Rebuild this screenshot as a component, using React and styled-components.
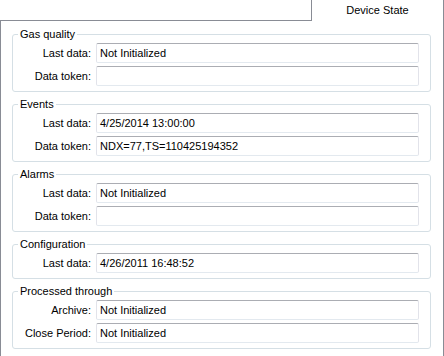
import React from 'react';
import styled, { createGlobalStyle } from 'styled-components';

const groups = [
  {
    title: 'Gas quality',
    rows: [
      { label: 'Last data:', value: 'Not Initialized' },
      { label: 'Data token:', value: '' },
    ],
  },
  {
    title: 'Events',
    rows: [
      { label: 'Last data:', value: '4/25/2014 13:00:00' },
      { label: 'Data token:', value: 'NDX=77,TS=110425194352' },
    ],
  },
  {
    title: 'Alarms',
    rows: [
      { label: 'Last data:', value: 'Not Initialized' },
      { label: 'Data token:', value: '' },
    ],
  },
  {
    title: 'Configuration',
    rows: [{ label: 'Last data:', value: '4/26/2011 16:48:52' }],
  },
  {
    title: 'Processed through',
    rows: [
      { label: 'Archive:', value: 'Not Initialized' },
      { label: 'Close Period:', value: 'Not Initialized' },
    ],
  },
];

const App = () => {
  return (
    <>
      <GlobalStyle />
      <Window>
        <TabStrip>
          <Tab>Device State</Tab>
        </TabStrip>
        <Page>
          {
            groups.map((group) => (
              <Group key={group.title}>
                <Legend>{ group.title }</Legend>
                <Rows>
                  {
                    group.rows.map((row) => (
                      <React.Fragment key={row.label}>
                        <Label>{ row.label }</Label>
                        <TextBox>{ row.value }</TextBox>
                      </React.Fragment>
                    ))
                  }
                </Rows>
              </Group>
            ))
          }
        </Page>
      </Window>
    </>
  );
}

const GlobalStyle = createGlobalStyle`
  html, body {
    margin: 0;
    padding: 0;
    background: #ffffff;
    overflow: hidden;
  }
  body {
    font-family: "Liberation Sans", Arial, sans-serif;
    font-size: 11px;
    color: #000000;
  }
`;

const Window = styled.div`
  display: flex;
  flex-direction: column;
  width: 444px;
  height: 356px;
`;

const TabStrip = styled.div`
  display: flex;
  justify-content: flex-end;
  height: 20px;
  padding-right: 0;
`;

const Tab = styled.div`
  display: flex;
  align-items: center;
  justify-content: center;
  width: 133px;
  height: 21px;
  margin-bottom: -1px;
  padding-bottom: 1px;
  box-sizing: border-box;
  background: #ffffff;
  border-left: 1px solid #898c95;
  border-right: 1px solid #898c95;
  position: relative;
  z-index: 1;
`;

const Page = styled.div`
  display: flex;
  flex-direction: column;
  gap: 6px;
  flex: 1;
  padding: 7px 12px 0 11px;
  border: 1px solid #898c95;
  border-bottom: none;
  background: #ffffff;
`;

const Group = styled.fieldset`
  margin: 0;
  padding: 2px 11px 5px 0;
  min-inline-size: 0;
  border: 1px solid #d5dfe5;
  border-radius: 3px;
`;

const Legend = styled.legend`
  margin-left: 5px;
  padding: 0 2px;
  line-height: 13px;
  font-size: 11px;
`;

const Rows = styled.div`
  display: grid;
  grid-template-columns: 78px 1fr;
  column-gap: 5px;
  row-gap: 3px;
`;

const Label = styled.div`
  display: flex;
  align-items: center;
  justify-content: flex-end;
  height: 20px;
  white-space: nowrap;
`;

const TextBox = styled.div`
  display: flex;
  align-items: center;
  height: 20px;
  box-sizing: border-box;
  padding: 0 3px;
  background: #ffffff;
  border: 1px solid #e2e3ea;
  border-top-color: #abadb3;
  border-bottom-color: #e3e9ef;
  border-radius: 2px;
  white-space: nowrap;
  overflow: hidden;
`;

export default App;
